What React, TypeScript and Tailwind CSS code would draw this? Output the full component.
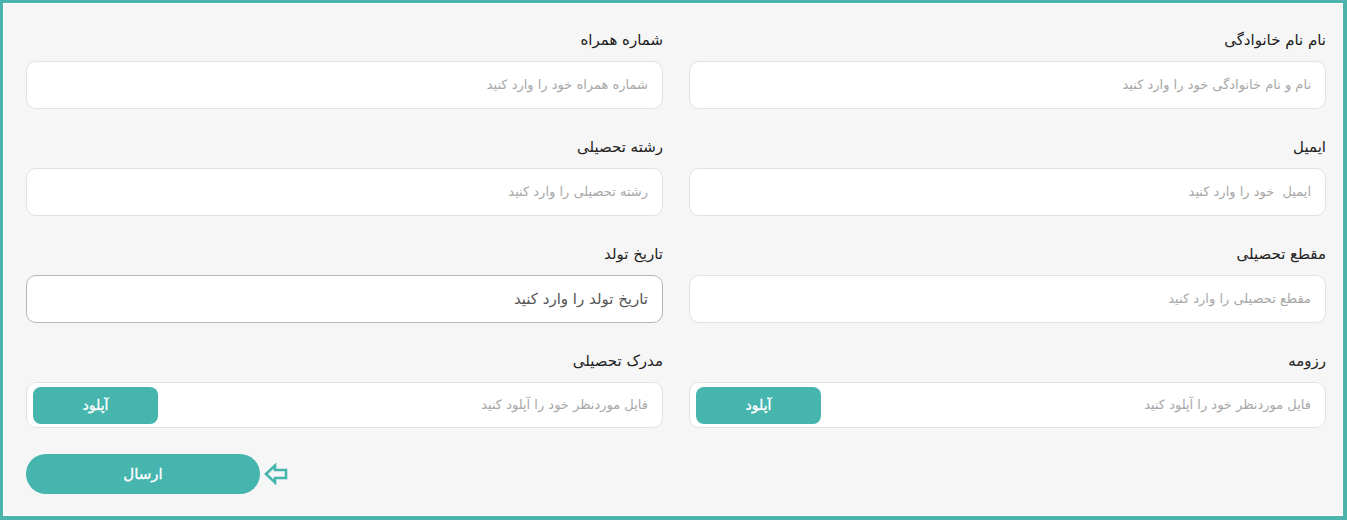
import React from "react";

const font = { fontFamily: '"DejaVu Sans", "Noto Sans", sans-serif' };

function Field({ label, placeholder, focused }: { label: string; placeholder: string; focused?: boolean }) {
  return (
    <div className="flex flex-col">
      <div className="h-[22px] mb-[10px] text-[15px] leading-[22px] text-[#222]">{label}</div>
      <div
        className={
          "h-[48px] rounded-[10px] bg-white flex items-center px-[14px] whitespace-pre " +
          (focused ? "border border-[#b5b5bd] text-[#555] text-[15px]" : "border border-[#e2e2e2] text-[#a8a8a8] text-[13px]")
        }
      >
        {placeholder}
      </div>
    </div>
  );
}

function UploadField({ label }: { label: string }) {
  return (
    <div className="flex flex-col">
      <div className="h-[22px] mb-[10px] text-[15px] leading-[22px] text-[#222]">{label}</div>
      <div className="h-[46px] rounded-[10px] bg-white border border-[#e2e2e2] flex items-center justify-between pr-[14px] pl-[6px] text-[13px] text-[#a8a8a8]">
        <span>فایل موردنظر خود را آپلود کنید</span>
        <div className="w-[125px] h-[37px] rounded-[8px] bg-[#45b5ae] text-white text-[14px] flex items-center justify-center [-webkit-text-stroke:0.3px_white]">
          آپلود
        </div>
      </div>
    </div>
  );
}

export default function App() {
  return (
    <div style={font} dir="rtl" className="w-[1347px] h-[520px] bg-[#4db3ad] pt-[3px] pl-[3px] pr-[4px] pb-[4px]">
      <div className="w-full h-full bg-[#f6f6f6] border border-white pt-[25px] pl-[22px] pr-[16px]">
        <div className="grid grid-cols-2 gap-x-[26px] gap-y-[27px]">
          <Field label="نام نام خانوادگی" placeholder="نام و نام خانوادگی خود را وارد کنید" />
          <Field label="شماره همراه" placeholder="شماره همراه خود را وارد کنید" />
          <Field label="ایمیل" placeholder="ایمیل  خود را وارد کنید" />
          <Field label="رشته تحصیلی" placeholder="رشته تحصیلی را وارد کنید" />
          <Field label="مقطع تحصیلی" placeholder="مقطع تحصیلی را وارد کنید" />
          <Field label="تاریخ تولد" placeholder="تاریخ تولد را وارد کنید" focused />
          <UploadField label="رزومه" />
          <UploadField label="مدرک تحصیلی" />
        </div>
        <div className="flex items-center justify-end gap-[4px] mt-[26px]">
          <svg width="24" height="22" viewBox="0 0 24 22" fill="none">
            <path d="M2 11 L11 2.5 L11 7 L22 7 L22 15 L11 15 L11 19.5 Z" stroke="#45b5ae" strokeWidth="2.6" strokeLinejoin="miter" fill="none" />
          </svg>
          <div className="w-[234px] h-[40px] rounded-full bg-[#45b5ae] text-white text-[15px] flex items-center justify-center [-webkit-text-stroke:0.3px_white]">
            ارسال
          </div>
        </div>
      </div>
    </div>
  );
}
